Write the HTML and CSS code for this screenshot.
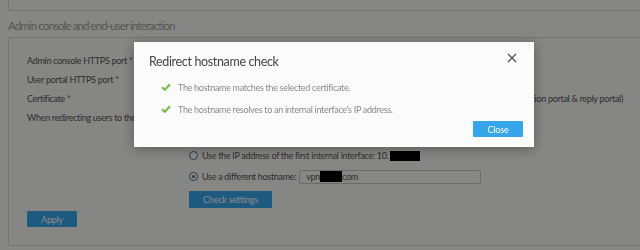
FILE: index.html
```html
<!DOCTYPE html>
<html>
<head>
  <title>Admin console and end-user interaction</title>
  <link rel="stylesheet" href="styles.css">
</head>
<body>
  <div class="page">
    <div class="prev-panel"></div>
    <h2 class="section-title">Admin console and end-user interaction</h2>

    <div class="panel">
      <div class="row">
        <label class="label">Admin console HTTPS port *</label>
        <div class="field"><input class="text-input port" type="text" value="4444"></div>
      </div>
      <div class="row">
        <label class="label">User portal HTTPS port *</label>
        <div class="field"><input class="text-input port" type="text" value="443"></div>
      </div>
      <div class="row">
        <label class="label">Certificate *</label>
        <div class="field">
          <select class="text-input cert"><option>ApplianceCertificate</option></select>
          <span class="note">(Admin console, captive portal, registration portal &amp; reply portal)</span>
        </div>
      </div>
      <div class="row redirect">
        <label class="label">When redirecting users to the portal</label>
        <div class="field options">
          <label class="option"><span class="radio"></span>Use the configured hostname</label>
          <label class="option"><span class="radio"></span>Use the hostname of the appliance</label>
          <label class="option"><span class="radio"></span>Use the IP address of the first internal interface: 10.<span class="redact ip"></span></label>
          <label class="option tall">
            <span class="radio checked"></span>Use a different hostname:
            <span class="host-input">vpn<span class="redact host"></span>com</span>
          </label>
          <button class="btn check">Check settings</button>
        </div>
      </div>
      <button class="btn apply">Apply</button>
    </div>
  </div>

  <!-- modal over the page -->
  <div class="backdrop">
    <div class="modal">
      <div class="modal-head">
        <h3>Redirect hostname check</h3>
        <svg class="close-x" width="10" height="10" viewBox="0 0 10 10">
          <path d="M1 1 L9 9 M9 1 L1 9" stroke="#555" stroke-width="1.3" fill="none"/>
        </svg>
      </div>
      <ul class="results">
        <li>
          <svg class="tick" width="10" height="8" viewBox="0 0 10 8">
            <path d="M1 4.2 L3.8 6.8 L9 1.2" stroke="#7bbd45" stroke-width="2.2" fill="none"/>
          </svg>
          The hostname matches the selected certificate.
        </li>
        <li>
          <svg class="tick" width="10" height="8" viewBox="0 0 10 8">
            <path d="M1 4.2 L3.8 6.8 L9 1.2" stroke="#7bbd45" stroke-width="2.2" fill="none"/>
          </svg>
          The hostname resolves to an internal interface's IP address.
        </li>
      </ul>
      <div class="modal-foot">
        <button class="btn close">Close</button>
      </div>
    </div>
  </div>
</body>
</html>
```

FILE: styles.css
```css
body {
  margin: 0;
  background-color: #f8f8f4;
  font-family: 'Lato', sans-serif;
  color: #555;
  overflow: hidden;
}

.page {
  padding: 0 0 0 8px;
}

.prev-panel {
  height: 10px;
  border: 1px solid #d8d8d4;
  border-top: none;
  margin-right: -20px;
}

.section-title {
  margin: 0;
  height: 26px;
  line-height: 29px;
  font-size: 11.5px;
  letter-spacing: -0.9px;
  font-weight: normal;
  color: #a0a09c;
}

.panel {
  border: 1px solid #d8d8d4;
  margin-right: -20px;
  padding: 13px 36px 18px 18px;
}

.row {
  display: flex;
  height: 19px;
  align-items: center;
}

.label {
  width: 162px;
  flex-shrink: 0;
  font-size: 9px;
  letter-spacing: -0.3px;
  white-space: nowrap;
}

.field {
  flex: 1;
  display: flex;
  align-items: center;
}

.text-input {
  height: 14px;
  border: 1px solid #ccc;
  background-color: #fff;
  font-family: 'Lato', sans-serif;
  font-size: 9px;
  padding: 0 4px;
  box-sizing: border-box;
}

.port {
  width: 60px;
}

.cert {
  width: 160px;
}

.note {
  margin-left: auto;
  font-size: 9px;
  letter-spacing: -0.3px;
}

.redirect {
  height: auto;
  align-items: flex-start;
}

.redirect .label {
  height: 19px;
  line-height: 19px;
}

.options {
  flex-direction: column;
  align-items: flex-start;
}

.option {
  display: flex;
  align-items: center;
  height: 19px;
  font-size: 9px;
  letter-spacing: -0.3px;
  white-space: nowrap;
}

.option.tall {
  height: 23px;
}

.radio {
  width: 9px;
  height: 9px;
  border: 1.3px solid #3f6e90;
  border-radius: 50%;
  margin-right: 4px;
  box-sizing: border-box;
  position: relative;
  background-color: #fff;
}

.radio.checked::after {
  content: "";
  position: absolute;
  left: 2px;
  top: 2px;
  width: 3px;
  height: 3px;
  border-radius: 50%;
  background-color: #3f6e90;
}

.redact {
  display: inline-block;
  background-color: #000;
}

.ip {
  width: 30px;
  height: 10px;
  margin-left: 1px;
}

.host-input {
  display: flex;
  align-items: center;
  margin-left: 3px;
  width: 182px;
  height: 14px;
  border: 1px solid #c4c4c0;
  border-radius: 2px;
  box-sizing: border-box;
  padding-left: 6px;
  font-size: 9px;
}

.host {
  width: 22px;
  height: 11px;
}

.btn {
  border: none;
  background-color: #35a6ec;
  color: #fff;
  font-family: 'Lato', sans-serif;
  font-size: 9px;
  letter-spacing: -0.2px;
  border-radius: 1px;
  padding: 0;
  cursor: pointer;
}

.check {
  margin-top: 3px;
  width: 83px;
  height: 17px;
}

.apply {
  display: block;
  margin-top: 3px;
  width: 50px;
  height: 16px;
}

/* Modal */
.backdrop {
  position: fixed;
  inset: 0;
  background-color: rgba(0, 0, 0, 0.46);
}

.modal {
  position: absolute;
  left: 134px;
  top: 42px;
  width: 400px;
  height: 105px;
  background-color: #fbfbfb;
  box-shadow: 0 2px 12px rgba(0, 0, 0, 0.35);
  box-sizing: border-box;
  padding: 10px 11px 0 15px;
}

.modal-head {
  display: flex;
  justify-content: space-between;
  align-items: flex-start;
  height: 24px;
}

.modal-head h3 {
  margin: 0;
  font-size: 12.5px;
  letter-spacing: -0.35px;
  font-weight: normal;
  line-height: 20px;
  color: #444;
}

.close-x {
  margin-top: 1px;
  margin-right: 6px;
}

.results {
  list-style: none;
  margin: 0;
  padding: 0 0 0 12px;
}

.results li {
  display: flex;
  align-items: center;
  height: 22px;
  font-size: 9px;
  letter-spacing: -0.3px;
  color: #8a8a8a;
}

.tick {
  margin-right: 7px;
}

.modal-foot {
  display: flex;
  justify-content: flex-end;
  margin-top: 1px;
}

.close {
  width: 50px;
  height: 16px;
}
```
